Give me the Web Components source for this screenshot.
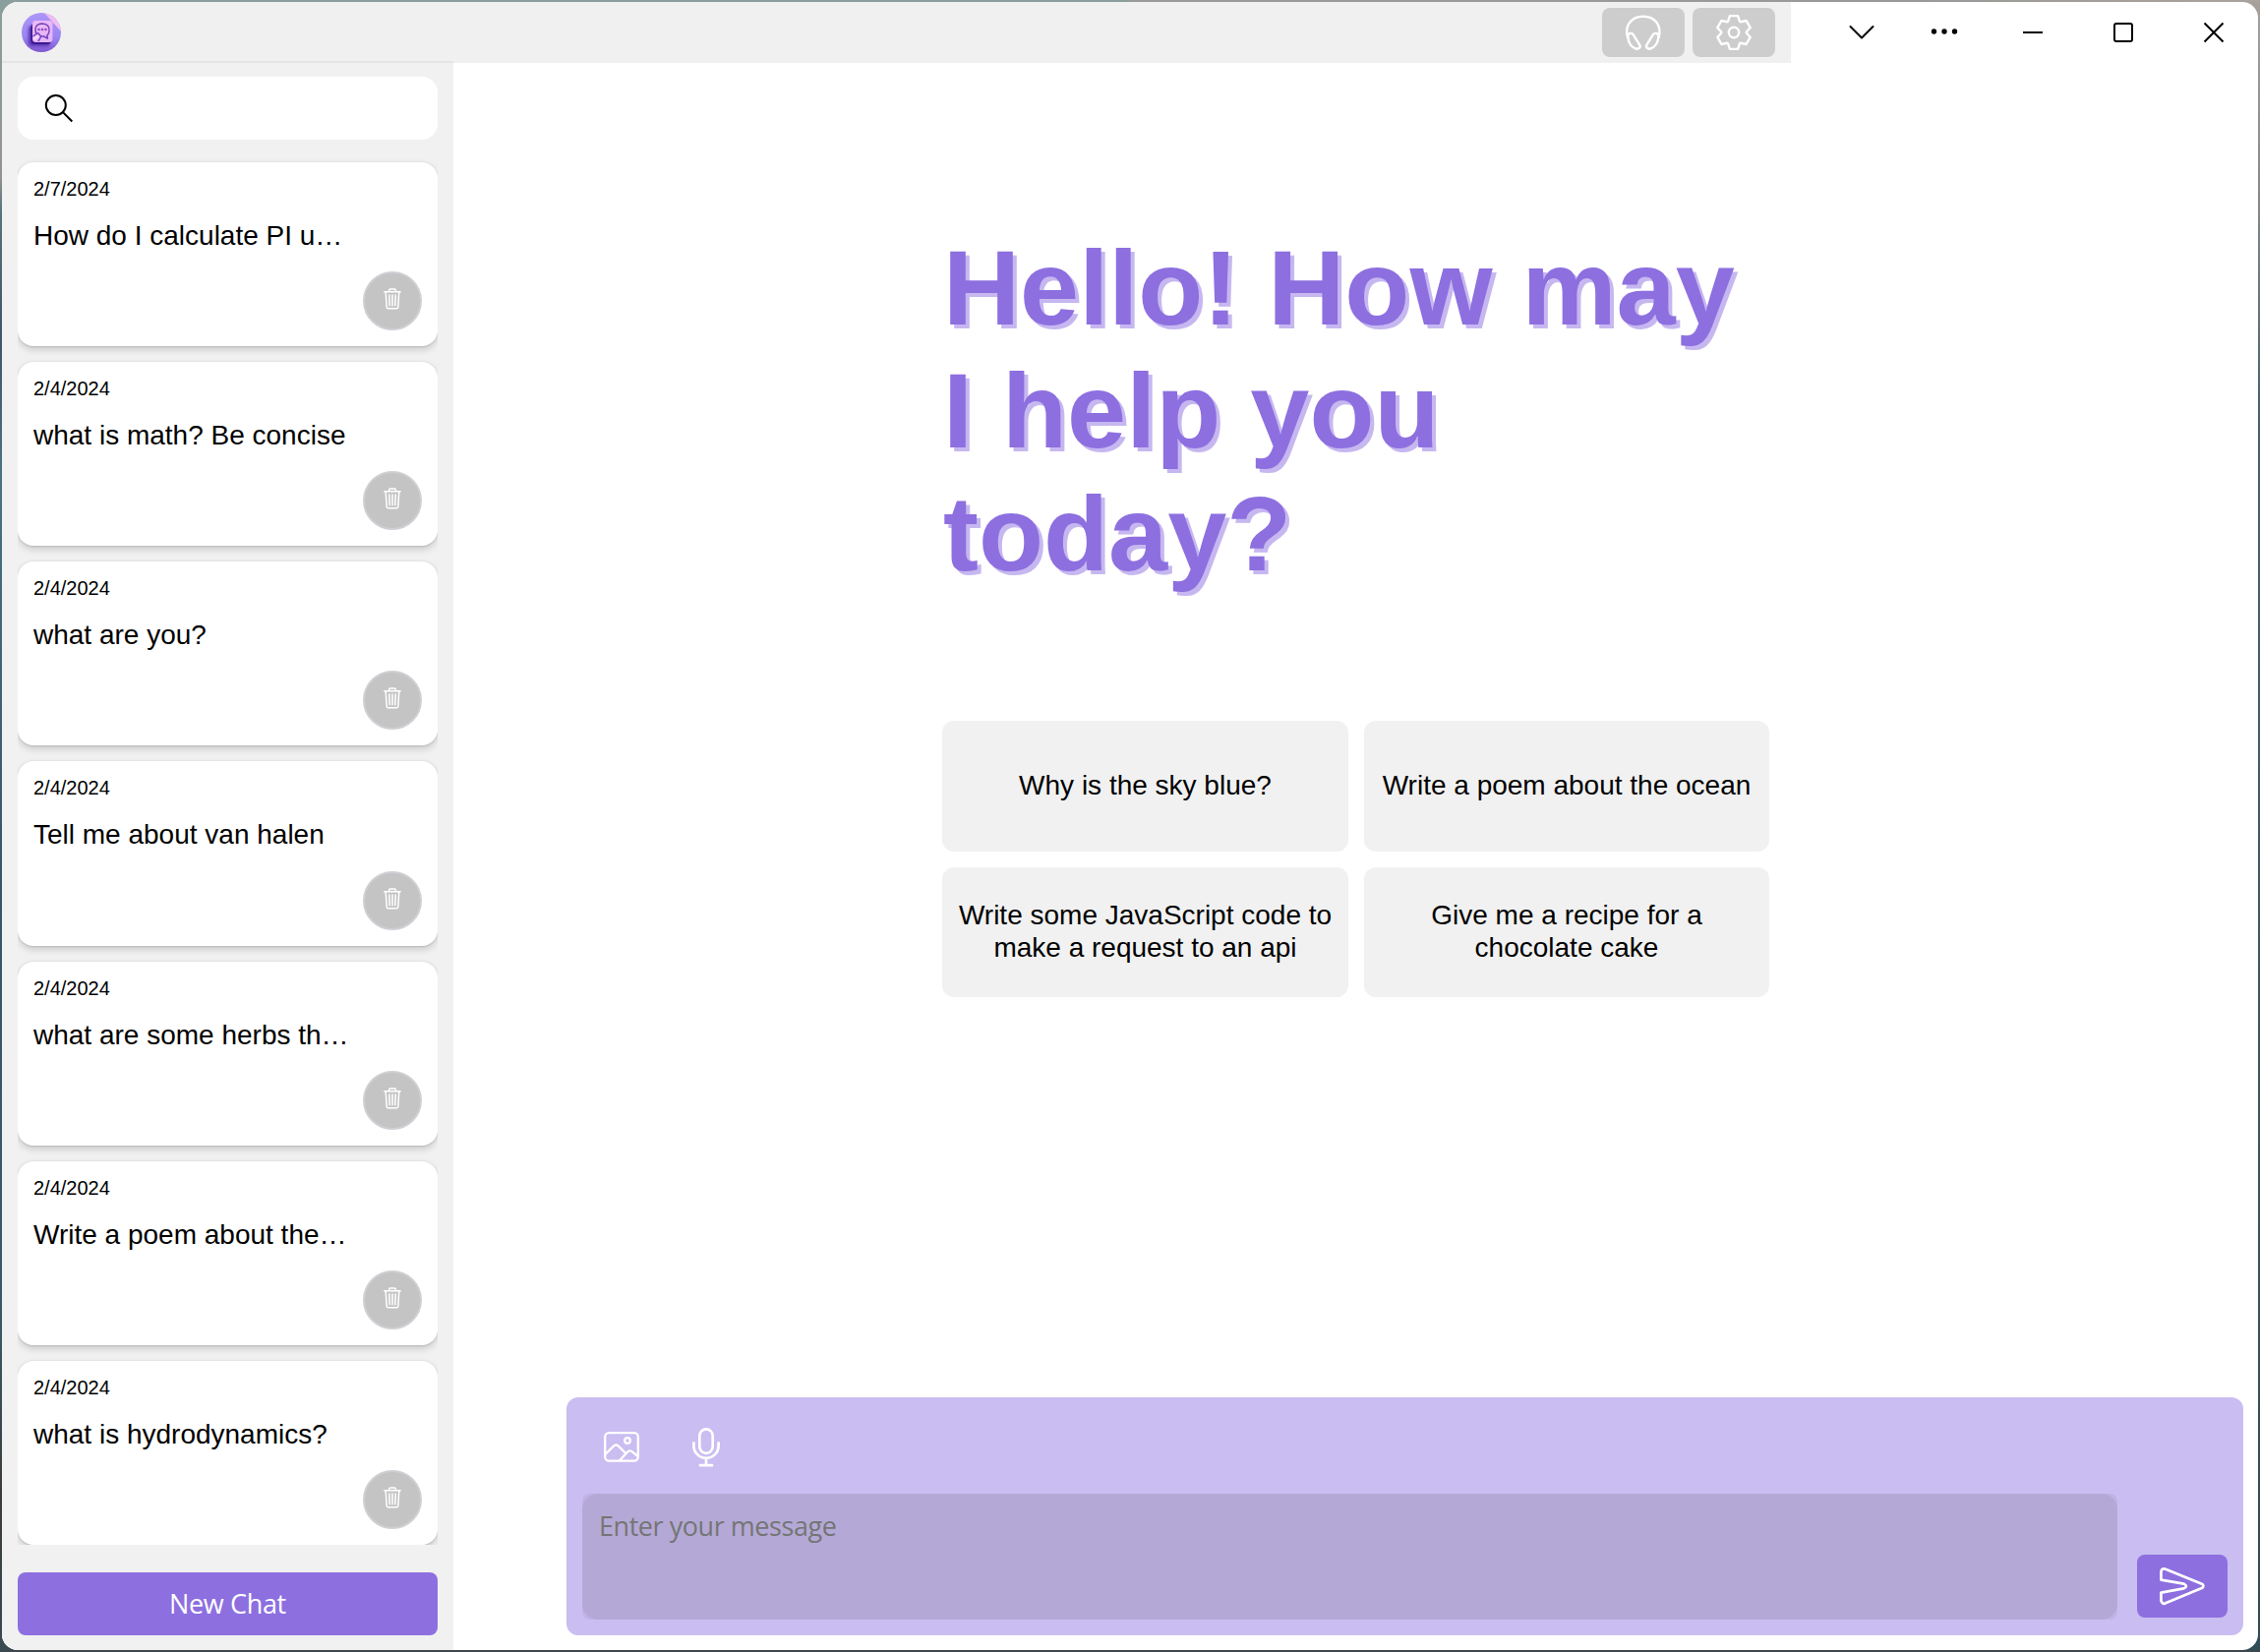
<!DOCTYPE html>
<html lang="en">
<head>
<meta charset="utf-8">
<title>Chat</title>
<style>
html,body{margin:0;height:100%;overflow:hidden}
body{font-family:"Liberation Sans",Arial,sans-serif;color:#000;height:1680px;
background:linear-gradient(90deg,transparent 0 50%,#9a9a98 50% 85%,#aaa29d) 0 0/100% 2px no-repeat,
linear-gradient(#8a9f9d,#929391 180px,#57737d 215px,#405767 340px,#4a7280 480px,#35566a 900px,#3b5a66 1350px,#3c3c3c 1520px,#3a4b52) 0 0/50% 1678px no-repeat,
linear-gradient(#a5a09c,#85898b 200px,#466170 420px,#3e5560 1100px,#2f4c56) 100% 0/50% 1678px no-repeat,#3d474d}
</style>
</head>
<body>
<app-window></app-window>
<script>
const define = (name, html, init) => customElements.define(name, class extends HTMLElement {
  constructor() {
    super();
    const t = document.createElement('template');
    t.innerHTML = html;
    this.attachShadow({mode: 'open'}).append(t.content.cloneNode(true));
  }
  connectedCallback() { if (init) init(this, this.shadowRoot); }
});

// Gear outline: one tooth repeated at 60 degree steps round the centre.
const gear = () => {
  const tooth = [[-5.9,-11.3],[-4.1,-16.9],[4.1,-16.9],[5.9,-11.3]], pts = [];
  for (let k = 0; k < 6; k++) {
    const a = k * Math.PI / 3, c = Math.cos(a), s = Math.sin(a);
    for (const [x, y] of tooth) pts.push((18 + x*c - y*s).toFixed(2) + ' ' + (18 + x*s + y*c).toFixed(2));
  }
  return 'M' + pts.join('L') + 'Z';
};
const icons = {
  headphones: [36, 36, 2.4, '<path d="M2 23C-1.5 10 6.5 1.7 17.8 1.7S37.1 10 33.6 23"/><path d="M2.2 22C2 18.6 6.4 17.8 8 20.6L14.2 30.6C15.8 33.4 12.6 35.6 9.4 34.2C5.4 32.4 2.6 27.4 2.2 22Z"/><path d="M33.4 22C33.6 18.6 29.2 17.8 27.6 20.6L21.4 30.6C19.8 33.4 23 35.6 26.2 34.2C30.2 32.4 33 27.4 33.4 22Z"/>'],
  gear: [36, 36, 2.4, `<path d="${gear()}"/><circle cx="18" cy="18" r="5.2"/>`],
  search: [30, 30, 2, '<circle cx="11.8" cy="12" r="10"/><path stroke-linecap="butt" d="M19.2 19.4L28.3 28.5"/>'],
  trash: [18, 22, 1.5, '<path d="M.8 3.8H17.2M5.6 3.4V2.2Q5.6 1 6.8 1H11.2Q12.4 1 12.4 2.2V3.4M2.2 4.2L3.2 19.2Q3.3 20.8 4.9 20.8H13.1Q14.7 20.8 14.8 19.2L15.8 4.2M5.8 7L6.2 17.8M9 7V17.8M12.2 7L11.8 17.8"/>'],
  picture: [36, 31, 2.3, '<rect x="1.2" y="1.2" width="33.6" height="28.4" rx="4"/><circle cx="24" cy="9" r="2.8"/><path d="M1.4 23L10.2 14.4Q12.4 12.6 14.6 14.4L22 21.8M16 29.2L24 20.6Q26.2 18.4 28.6 20.2L34.6 25"/>'],
  mic: [28, 40, 2.7, '<rect x="7.3" y="1.4" width="13.4" height="24.4" rx="6.7"/><path d="M1.4 15.4V18.2A12.6 12.6 0 0 0 26.6 18.2V15.4M14 31V38M8 38.2H20"/>'],
  send: [46, 38, 2.7, '<path d="M1.4 4.2Q2.2.6 5.4 1.6L43.4 17Q45.4 18.8 43.4 20.8L5.4 36.6Q2.8 37.4 1.4 34V25.6L24.6 21.4Q29.4 19 24.6 16.6L1.4 12.6Z"/>'],
  down: [26, 14, 2, '<path d="M1.5 1L13 12.5L24.5 1"/>'],
  dots: [28, 8, 0, '<g fill="currentColor"><circle cx="3.5" cy="3" r="2.7"/><circle cx="14" cy="3" r="2.7"/><circle cx="24.5" cy="3" r="2.7"/></g>'],
  min: [20, 2, 2, '<path stroke-linecap="butt" d="M0 1H20"/>'],
  max: [20, 20, 2, '<rect x="1" y="1" width="18" height="18" rx="2"/>'],
  close: [20, 20, 2, '<path stroke-linecap="butt" d="M.5 .5L19.5 19.5M19.5 .5L.5 19.5"/>']
};
define('line-icon', '<style>:host{display:block;flex:none}svg{display:block;overflow:visible}</style><span></span>', (el, root) => {
  const [w, h, s, body] = icons[el.getAttribute('name')];
  root.querySelector('span').innerHTML = `<svg width="${w}" height="${h}" viewBox="0 0 ${w} ${h}" fill="none" stroke="currentColor" stroke-width="${s}" stroke-linecap="round" stroke-linejoin="round">${body}</svg>`;
});

define('app-logo', `<style>:host{display:block;width:40px;height:40px}svg{display:block}</style>
<svg width="40" height="40" viewBox="0 0 40 40"><defs><linearGradient id="g" x2="0" y2="1"><stop stop-color="#ad96f8"/><stop offset=".6" stop-color="#9b87f2"/><stop offset="1" stop-color="#8057cf"/></linearGradient><linearGradient id="p" x2=".4" y2="1"><stop stop-color="#f0b9f5"/><stop offset="1" stop-color="#e5b4fa"/></linearGradient><clipPath id="c"><circle cx="20" cy="20" r="20"/></clipPath><filter id="b" x="-30%" y="-30%" width="160%" height="160%"><feGaussianBlur stdDeviation="1.6"/></filter></defs>
<g clip-path="url(#c)"><path fill="url(#g)" d="M0 0H40V40H0Z"/><path fill="#f1bdf0" d="M23 0H40V19Z"/><rect x="7" y="13" width="22" height="21" rx="4" fill="#5a35b4" filter="url(#b)"/><rect x="9.5" y="11" width="20.5" height="21" rx="4" fill="#3a1993"/><rect x="11" y="8" width="20.5" height="22" rx="3.5" fill="url(#p)"/>
<g fill="none" stroke="#7145b8" stroke-width="1.5" stroke-linejoin="round"><path d="M15 22Q11.5 11.5 21 11Q29 11.5 28 19Q27.5 22 26 22.7L26.3 26.2L22.7 24H20"/><path d="M11.5 24L16.5 20.5L19.8 24L17 29"/></g><path d="M11.5 25.5L16 22.5L18.2 24.7L13 28.5Z" fill="#f9d3ff"/><g fill="#8c50c8"><circle cx="17.5" cy="17" r="1.3"/><circle cx="21" cy="17" r="1.3"/><circle cx="24.5" cy="17" r="1.3"/></g></g></svg>`);

define('tool-button', `<style>:host{display:flex;align-items:center;justify-content:center;width:84px;height:50px;border-radius:8px;background:#cdcdcd;color:#fff}</style><slot></slot>`);

define('title-bar', `<style>
:host{display:flex;height:62px;flex:none}
.brand{flex:1;display:flex;background:#f0f0f0;padding:0 16px 0 20px;align-items:center}
.tools{display:flex;gap:8px;margin-left:auto}
.win{width:475px;box-sizing:border-box;display:flex;align-items:center;padding-left:59px;gap:72px}
.win :first-child{margin-right:-15px}
.win :nth-child(2){margin-right:-6px}
</style><div class="brand"><app-logo></app-logo><div class="tools"><tool-button><line-icon name="headphones"></line-icon></tool-button><tool-button><line-icon name="gear"></line-icon></tool-button></div></div>
<div class="win"><line-icon name="down"></line-icon><line-icon name="dots"></line-icon><line-icon name="min"></line-icon><line-icon name="max"></line-icon><line-icon name="close"></line-icon></div>`);

define('chat-card', `<style>
:host{display:flex;flex-direction:column;flex:none;box-sizing:border-box;height:187.17px;padding:16px;border-radius:16px;background:#fff;box-shadow:0 3.2px 7.2px rgba(0,0,0,.15),0 .6px 1.8px rgba(0,0,0,.12)}
time{font-size:20px;line-height:23px}
h3{margin:20px 0 0;font-weight:400;font-size:28px;line-height:32px;white-space:nowrap}
.del{margin:auto 0 0 auto;box-sizing:border-box;width:60px;height:60px;border-radius:50%;border:2px solid #cfcfd4;background:#c4c4c4;color:#fff;display:flex;align-items:center;justify-content:center;padding-bottom:4px}
</style><time></time><h3><slot></slot></h3><div class="del"><line-icon name="trash"></line-icon></div>`,
(el, root) => { root.querySelector('time').textContent = el.getAttribute('date'); });

define('side-bar', `<style>
:host{display:flex;flex-direction:column;flex:none;box-sizing:border-box;width:459px;padding:14px 16px 15px;background:#f1f1f1;box-shadow:0 -2px #e4e4e4}
.search{height:64px;flex:none;border-radius:16px;background:#fff;display:flex;align-items:center;padding-left:27px}
.list{margin-top:17px;padding-top:6px;height:1412px;box-sizing:border-box;display:flex;flex-direction:column;gap:16px;overflow:hidden}
.new{margin-top:auto;height:64px;border-radius:8px;background:#8d6fe0;color:#fff;display:flex;align-items:center;justify-content:center;font:27px/38px "Open Sans",sans-serif;letter-spacing:-.35px}
</style><div class="search"><line-icon name="search"></line-icon></div><div class="list">
<chat-card date="2/7/2024">How do I calculate PI u…</chat-card>
<chat-card date="2/4/2024">what is math? Be concise</chat-card>
<chat-card date="2/4/2024">what are you?</chat-card>
<chat-card date="2/4/2024">Tell me about van halen</chat-card>
<chat-card date="2/4/2024">what are some herbs th…</chat-card>
<chat-card date="2/4/2024">Write a poem about the…</chat-card>
<chat-card date="2/4/2024">what is hydrodynamics?</chat-card></div>
<div class="new">New Chat</div>`);

define('suggestion-card', `<style>:host{display:flex;align-items:center;justify-content:center;text-align:center;box-sizing:border-box;padding:0 14px;border-radius:12px;background:#f1f1f1;font-size:28px;line-height:32.3px}</style><span><slot></slot></span>`);

define('chat-welcome', `<style>
:host{display:block;width:841px;margin:166px 0 0 497px}
h1{margin:0 0 0 1px;font-size:108.1px;line-height:125px;font-weight:700;color:#8d6fe0;text-shadow:4px 4px #c6b7f0}
.grid{margin-top:128px;display:grid;grid-template-columns:413px 412px;grid-auto-rows:132.5px;gap:16px}
</style><h1>Hello! How may I help you today?</h1><div class="grid">
<suggestion-card>Why is the sky blue?</suggestion-card><suggestion-card>Write a poem about the ocean</suggestion-card><suggestion-card>Write some JavaScript code to make a request to an api</suggestion-card><suggestion-card>Give me a recipe for a chocolate cake</suggestion-card></div>`);

define('message-composer', `<style>
:host{display:flex;flex-direction:column;box-sizing:border-box;height:242px;margin:auto 15px 15px 115px;border-radius:12px;background:#cabdf1;padding:0 16px 16px;color:#fff}
.actions{display:flex;align-items:center;gap:54px;height:98px;padding:3px 0 0 22px;box-sizing:border-box}
.row{display:flex;align-items:flex-end;gap:20px}
.box{flex:1;height:128px;border-radius:8px;background:#c0b2e5}
.field{height:128px;box-sizing:border-box;border-radius:16px;background:#b4a9d6;padding:14px 17px;color:#757575;font:27px/38px "Open Sans",sans-serif;letter-spacing:-.45px}
.send{width:92px;height:64px;margin-bottom:2px;border-radius:8px;background:#8d6fe0;display:flex;align-items:center;justify-content:center}
</style><div class="actions"><line-icon name="picture"></line-icon><line-icon name="mic"></line-icon></div>
<div class="row"><div class="box"><div class="field">Enter your message</div></div><div class="send"><line-icon name="send"></line-icon></div></div>`);

define('app-window', `<style>
:host{display:flex;flex-direction:column;width:2294px;height:1676px;margin:2px;border-radius:16px;overflow:hidden;background:#fff}
.body{flex:1;display:flex}
main{flex:1;display:flex;flex-direction:column;min-width:0}
</style><title-bar></title-bar><div class="body"><side-bar></side-bar><main><chat-welcome></chat-welcome><message-composer></message-composer></main></div>`);
</script>
</body>
</html>
